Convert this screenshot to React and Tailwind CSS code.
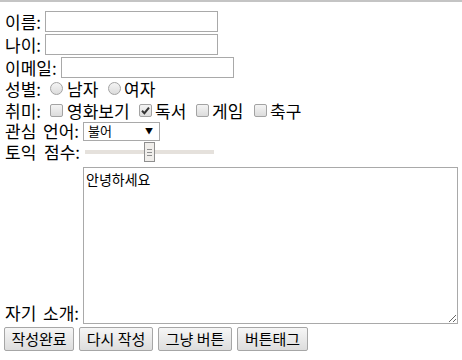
const font = { fontFamily: '"Noto Sans CJK KR", "Liberation Sans", sans-serif' }

function Radio() {
  return (
    <span className="inline-block h-[13px] w-[13px] shrink-0 rounded-full border border-[#a3a3a3] bg-gradient-to-b from-[#f4f4f4] to-[#dcdcdc]" />
  )
}

function Check({ checked = false }) {
  return (
    <span className="relative flex h-[13px] w-[13px] shrink-0 items-center justify-center rounded-[2px] border border-[#a3a3a3] bg-gradient-to-b from-[#f4f4f4] to-[#dcdcdc]">
      {checked && (
        <svg width="9" height="9" viewBox="0 0 9 9" className="text-[#333]">
          <path d="M1 4.8 L3.4 7.2 L8 1.6" fill="none" stroke="currentColor" strokeWidth="2" />
        </svg>
      )}
    </span>
  )
}

function Btn({ children, w }) {
  return (
    <button
      type="button"
      className={`flex h-[24px] ${w} items-center justify-center rounded-[2px] border border-[#a6a6a6] bg-gradient-to-b from-[#f6f6f6] to-[#dddddd] text-[15px] leading-[20px] text-black`}
    >
      {children}
    </button>
  )
}

export default function App() {
  return (
    <div className="h-[360px] w-[462px] overflow-hidden border-t-2 border-[#c4c4c4] bg-white text-[17px] leading-[20px] whitespace-nowrap text-black" style={font}>
      <div className="pl-[5px]">
        <div className="mt-[9px] flex h-[21px] items-center">
          <span className="w-[40px]">이름:</span>
          <input className="h-[21px] w-[173px] border border-[#a9a9a9] px-1 text-[13px] outline-none" />
        </div>
        <div className="mt-[2px] flex h-[21px] items-center">
          <span className="w-[40px]">나이:</span>
          <input className="h-[21px] w-[173px] border border-[#a9a9a9] px-1 text-[13px] outline-none" />
        </div>
        <div className="mt-[2px] flex h-[21px] items-center">
          <span className="w-[56px]">이메일:</span>
          <input className="h-[21px] w-[173px] border border-[#a9a9a9] px-1 text-[13px] outline-none" />
        </div>
        <div className="flex h-[21px] items-center">
          <span className="w-[45px]">성별:</span>
          <Radio />
          <span className="ml-[4px] w-[41px]">남자</span>
          <Radio />
          <span className="ml-[3px]">여자</span>
        </div>
        <div className="flex h-[21px] items-center pt-[2px]">
          <span className="w-[45px]">취미:</span>
          <Check />
          <span className="ml-[4px] w-[72px]">영화보기</span>
          <Check checked />
          <span className="ml-[3px] w-[41px]">독서</span>
          <Check />
          <span className="ml-[3px] w-[42px]">게임</span>
          <Check />
          <span className="ml-[3px]">축구</span>
        </div>
        <div className="mt-[1px] flex h-[20px] items-center">
          <span className="w-[78px] [word-spacing:3px]">관심 언어:</span>
          <div className="flex h-[19px] w-[77px] items-center justify-between border border-[#a9a9a9] bg-white pl-[4px] pr-[6px] text-[13px] leading-[16px]">
            <span>불어</span>
            <span className="text-[8px]">▼</span>
          </div>
        </div>
        <div className="flex h-[22px] items-center">
          <span className="w-[78px] [word-spacing:4px]">토익 점수:</span>
          <div className="relative ml-[2px] flex h-[22px] w-[129px] items-center">
            <div className="h-[4px] w-full bg-[#e5e1dc]" />
            <div className="absolute left-[59px] top-[1px] flex h-[20px] w-[11px] flex-col items-center justify-center gap-[2px] border border-[#8f8f8f] bg-[#f0eeeb]">
              <span className="h-px w-[5px] bg-[#8f8f8f]" />
              <span className="h-px w-[5px] bg-[#8f8f8f]" />
              <span className="h-px w-[5px] bg-[#8f8f8f]" />
            </div>
          </div>
        </div>
        <div className="mt-[4px] flex items-end">
          <span className="mb-[1px] w-[78px] [word-spacing:3px]">자기 소개:</span>
          <textarea
            defaultValue="안녕하세요"
            className="h-[157px] w-[375px] border border-[#a9a9a9] px-[2px] py-[2px] text-[14px] leading-[18px] outline-none"
            style={font}
          />
        </div>
      </div>
      <div className="mt-[3px] flex gap-[5px] pl-[4px]">
        <Btn w="w-[70px]">작성완료</Btn>
        <Btn w="w-[74px]">다시 작성</Btn>
        <Btn w="w-[74px]">그냥 버튼</Btn>
        <Btn w="w-[71px]">버튼태그</Btn>
      </div>
    </div>
  )
}
